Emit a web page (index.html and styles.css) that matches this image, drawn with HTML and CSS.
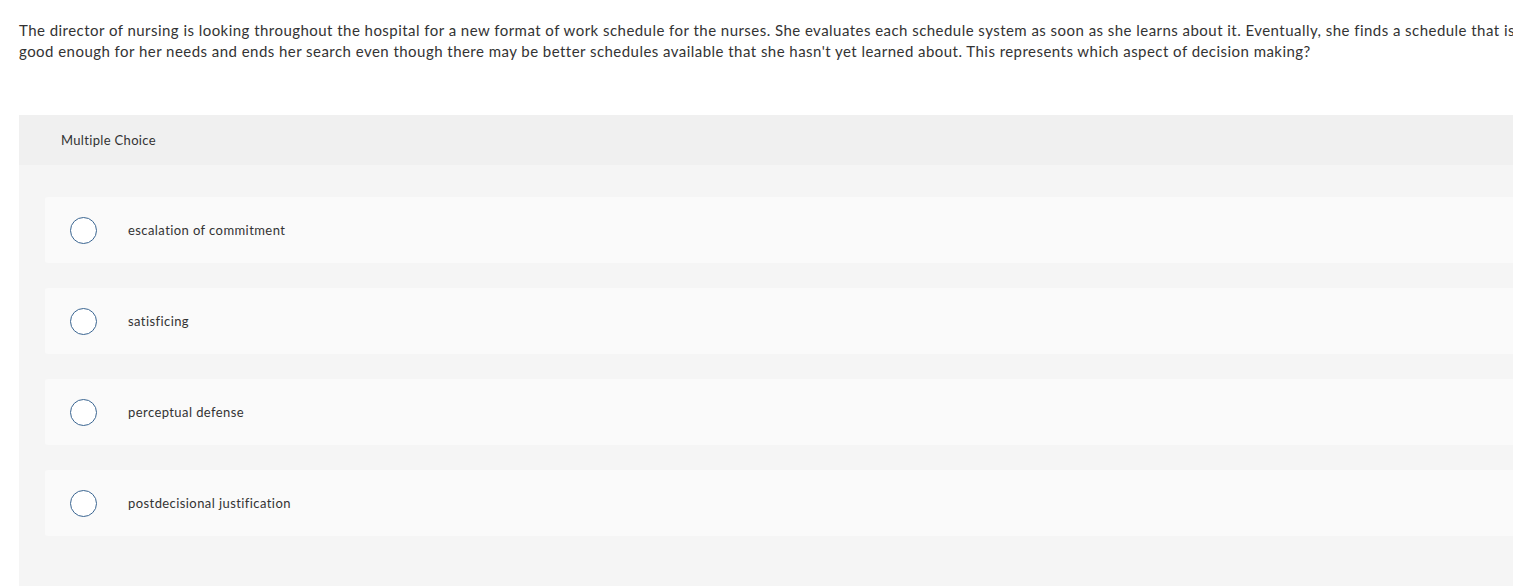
FILE: index.html
```html
<!DOCTYPE html>
<html>
<head>
<meta charset="utf-8">
<link rel="stylesheet" href="styles.css">
</head>
<body>
<div class="page">
  <p class="question">The director of nursing is looking throughout the hospital for a new format of work schedule for the nurses. She evaluates each schedule system as soon as she learns about it. Eventually, she finds a schedule that is good enough for her needs and ends her search even though there may be better schedules available that she hasn't yet learned about. This represents which aspect of decision making?</p>
  <section class="panel">
    <div class="panel-header">Multiple Choice</div>
    <div class="panel-body">
      <label class="option"><span class="radio"></span><span class="option-text">escalation of commitment</span></label>
      <label class="option"><span class="radio"></span><span class="option-text">satisficing</span></label>
      <label class="option"><span class="radio"></span><span class="option-text">perceptual defense</span></label>
      <label class="option"><span class="radio"></span><span class="option-text">postdecisional justification</span></label>
    </div>
  </section>
</div>
</body>
</html>
```

FILE: styles.css
```css
html, body {
  margin: 0;
  padding: 0;
  overflow: hidden;
  background: #fff;
}
body {
  font-family: Lato, "Open Sans", sans-serif;
  font-variant-ligatures: none;
  color: #333;
}
.page {
  width: 1540px;
  padding: 20px 0 0 19px;
}
.question {
  margin: 0;
  width: 1510px;
  font-size: 15px;
  line-height: 21px;
  letter-spacing: 0.46px;
  color: #333;
}
.panel {
  margin-top: 53px;
  background: #f5f5f5;
  border-radius: 3px 0 0 0;
}
.panel-header {
  height: 50px;
  display: flex;
  align-items: center;
  padding-left: 42px;
  background: #f0f0f0;
  font-size: 13px;
  letter-spacing: 0.33px;
  color: #333;
}
.panel-body {
  padding: 32px 0 50px 26px;
  display: flex;
  flex-direction: column;
  gap: 25px;
}
.option {
  height: 66px;
  background: #fafafa;
  border-radius: 3px;
  display: flex;
  align-items: center;
  padding-left: 25px;
}
.radio {
  width: 25px;
  height: 25px;
  border: 1.5px solid #3a6591;
  border-radius: 50%;
  background: #fff;
  flex: none;
}
.option-text {
  margin-left: 31px;
  font-size: 13px;
  letter-spacing: 0.42px;
  color: #333;
}
```
